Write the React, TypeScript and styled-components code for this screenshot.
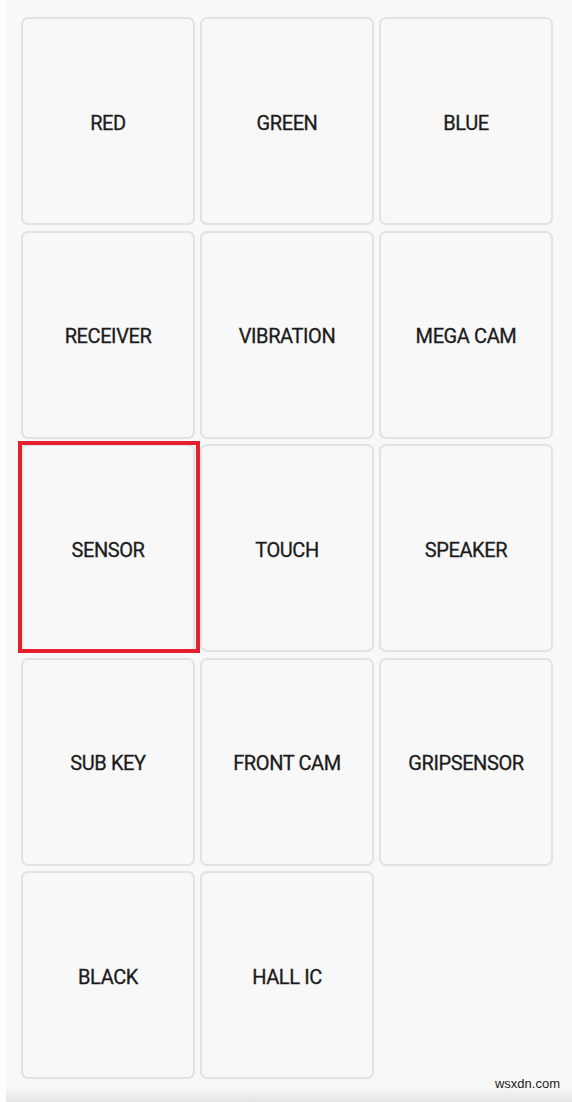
import React from "react";
import styled, { createGlobalStyle } from "styled-components";

const GlobalStyle = createGlobalStyle`
  html, body {
    margin: 0;
    padding: 0;
    background: #f8f8f8;
  }
  * { box-sizing: border-box; }
`;

const Page = styled.div`
  width: 572px;
  height: 1102px;
  background: #f8f8f8;
  border-left: 6px solid #fdfdfd;
  display: flex;
  flex-direction: column;
  overflow: hidden;
`;

const Grid = styled.div`
  display: grid;
  grid-template-columns: repeat(3, 174px);
  grid-auto-rows: 208px;
  column-gap: 5px;
  row-gap: 5.5px;
  padding: 17px 0 0 15px;
  flex: 1;
`;

const Cell = styled.div`
  position: relative;
  display: flex;
  align-items: center;
  justify-content: center;
  padding-top: 3px;
  background: #f8f8f8;
  border: 2px solid #e2e2e2;
  border-radius: 7px;
  font-family: Roboto, "Noto Sans", sans-serif;
  font-weight: 400;
  font-size: 20px;
  color: #1c1c1c;
  letter-spacing: -0.4px;
  -webkit-text-stroke: 0.3px #1c1c1c;
`;

const Highlight = styled.div`
  position: absolute;
  left: -5px;
  top: -5px;
  width: 182px;
  height: 212px;
  border: 4px solid #e3202b;
  pointer-events: none;
`;

const BottomBar = styled.div`
  height: 14px;
  background: linear-gradient(#f6f6f6, #e4e4e4);
  display: flex;
  justify-content: flex-end;
  align-items: flex-start;
  padding-right: 12px;
`;

const Watermark = styled.span`
  font-family: "Liberation Sans", Arial, sans-serif;
  font-size: 13px;
  color: #1a1a1a;
  margin-top: -12px;
`;

const items = [
  "RED", "GREEN", "BLUE",
  "RECEIVER", "VIBRATION", "MEGA CAM",
  "SENSOR", "TOUCH", "SPEAKER",
  "SUB KEY", "FRONT CAM", "GRIPSENSOR",
  "BLACK", "HALL IC",
];

export default function App() {
  return (
    <>
      <GlobalStyle />
      <Page>
        <Grid>
          {items.map((label) => (
            <Cell key={label}>
              {label}
              {label === "SENSOR" && <Highlight />}
            </Cell>
          ))}
        </Grid>
        <BottomBar>
          <Watermark>wsxdn.com</Watermark>
        </BottomBar>
      </Page>
    </>
  );
}
